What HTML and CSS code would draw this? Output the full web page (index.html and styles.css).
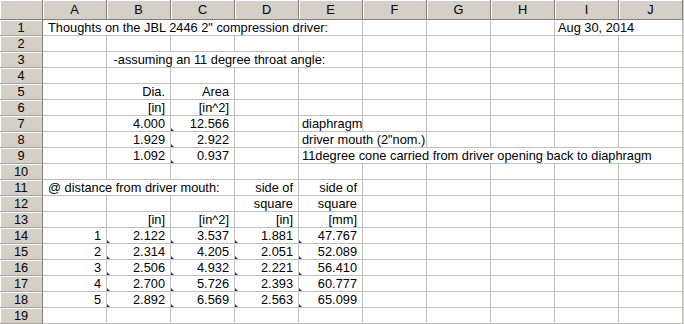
FILE: index.html
```html
<!DOCTYPE html>
<html>
<head>
<meta charset="utf-8">
<link rel="stylesheet" href="styles.css">
</head>
<body>
<div class="sheet">
  <div class="h corner"></div><div class="h">A</div><div class="h">B</div><div class="h">C</div><div class="h">D</div><div class="h">E</div><div class="h">F</div><div class="h">G</div><div class="h">H</div><div class="h">I</div><div class="h">J</div>

  <div class="r">1</div><div class="s5 t1">Thoughts on the JBL 2446 2" compression driver:</div><div></div><div></div><div></div><div class="s2">Aug 30, 2014</div>
  <div class="r">2</div><div></div><div></div><div></div><div></div><div></div><div></div><div></div><div></div><div></div><div></div>
  <div class="r">3</div><div></div><div class="s4">&nbsp;-assuming an 11 degree throat angle:</div><div></div><div></div><div></div><div></div><div></div>
  <div class="r">4</div><div></div><div></div><div></div><div></div><div></div><div></div><div></div><div></div><div></div><div></div>
  <div class="r">5</div><div></div><div class="n">Dia.</div><div class="n">Area</div><div></div><div></div><div></div><div></div><div></div><div></div><div></div>
  <div class="r">6</div><div></div><div class="n">[in]</div><div class="n">[in^2]</div><div></div><div></div><div></div><div></div><div></div><div></div><div></div>
  <div class="r">7</div><div></div><div class="n m">4.000</div><div class="n">12.566</div><div></div><div>diaphragm</div><div></div><div></div><div></div><div></div><div></div>
  <div class="r">8</div><div></div><div class="n m">1.929</div><div class="n">2.922</div><div></div><div class="s2">driver mouth (2"nom.)</div><div></div><div></div><div></div><div></div>
  <div class="r">9</div><div></div><div class="n m">1.092</div><div class="n">0.937</div><div></div><div class="s6">11degree cone carried from driver opening back to diaphragm</div>
  <div class="r">10</div><div></div><div></div><div></div><div></div><div></div><div></div><div></div><div></div><div></div><div></div>
  <div class="r">11</div><div class="s3 t1">@ distance from driver mouth:</div><div class="n">side of</div><div class="n">side of</div><div></div><div></div><div></div><div></div><div></div>
  <div class="r">12</div><div></div><div></div><div></div><div class="n">square</div><div class="n">square</div><div></div><div></div><div></div><div></div><div></div>
  <div class="r">13</div><div></div><div class="n">[in]</div><div class="n">[in^2]</div><div class="n">[in]</div><div class="n">[mm]</div><div></div><div></div><div></div><div></div><div></div>
  <div class="r">14</div><div class="n m">1</div><div class="n m">2.122</div><div class="n m">3.537</div><div class="n m">1.881</div><div class="n">47.767</div><div></div><div></div><div></div><div></div><div></div>
  <div class="r">15</div><div class="n m">2</div><div class="n m">2.314</div><div class="n m">4.205</div><div class="n m">2.051</div><div class="n">52.089</div><div></div><div></div><div></div><div></div><div></div>
  <div class="r">16</div><div class="n m">3</div><div class="n m">2.506</div><div class="n m">4.932</div><div class="n m">2.221</div><div class="n">56.410</div><div></div><div></div><div></div><div></div><div></div>
  <div class="r">17</div><div class="n m">4</div><div class="n m">2.700</div><div class="n m">5.726</div><div class="n m">2.393</div><div class="n">60.777</div><div></div><div></div><div></div><div></div><div></div>
  <div class="r">18</div><div class="n m">5</div><div class="n m">2.892</div><div class="n m">6.569</div><div class="n m">2.563</div><div class="n">65.099</div><div></div><div></div><div></div><div></div><div></div>
  <div class="r">19</div><div></div><div></div><div></div><div></div><div></div><div></div><div></div><div></div><div></div><div></div>
</div>
</body>
</html>
```

FILE: styles.css
```css
html, body {
  margin: 0;
  padding: 0;
  background: #ffffff;
}

body {
  font-family: "Liberation Sans", Arial, sans-serif;
  font-size: 12.8px;
  color: #000000;
}

.sheet {
  display: grid;
  grid-template-columns: 43px repeat(10, 64px);
  grid-template-rows: 20px repeat(19, 16px);
  width: 683px;
  border-right: 1px solid #d4d0c8;
}

.sheet > div {
  box-sizing: border-box;
  position: relative;
  border-right: 1px solid #c0c0c0;
  border-bottom: 1px solid #c0c0c0;
  padding: 1px 3px 0 3px;
  line-height: 14px;
  white-space: nowrap;
  overflow: visible;
}

.sheet > .h {
  background: #d4d0c8;
  text-align: center;
  padding: 1px 0 0 0;
  line-height: 18px;
  border-right: 1px solid #808080;
  border-bottom: 1px solid #808080;
  box-shadow: inset 1px 1px 0 #ffffff;
}

.sheet > .r {
  background: #d4d0c8;
  text-align: center;
  padding: 1px 0 0 0;
  border-right: 1px solid #808080;
  border-bottom: 1px solid #a8a49c;
  box-shadow: inset 1px 1px 0 #ffffff;
}

.sheet > .n {
  text-align: right;
  padding-right: 5px;
}

.sheet > .t1 {
  padding-left: 5px;
}

.s2 { grid-column: span 2; }
.s3 { grid-column: span 3; }
.s4 { grid-column: span 4; }
.s5 { grid-column: span 5; }
.s6 { grid-column: span 6; }

.m::after {
  content: "";
  position: absolute;
  right: -4px;
  bottom: 0;
  width: 3px;
  height: 3px;
  background: #2a2a9a;
  clip-path: polygon(0 0, 100% 100%, 0 100%);
  z-index: 1;
}
```
